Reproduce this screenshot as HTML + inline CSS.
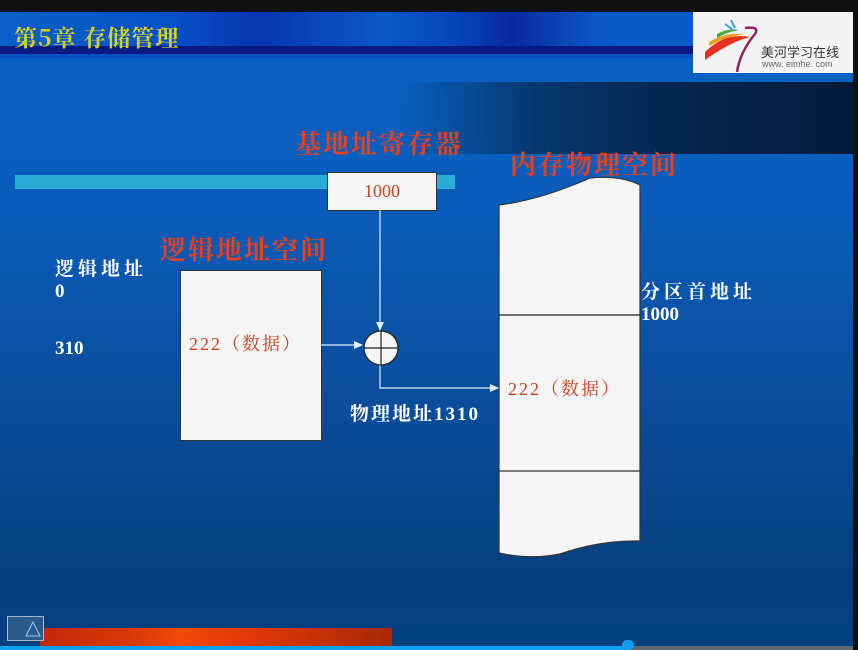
<!DOCTYPE html>
<html><head><meta charset="utf-8"><style>
body{margin:0;width:858px;height:650px;overflow:hidden;background:#111;position:relative;font-family:"Liberation Serif","Noto Serif CJK SC",serif}
.a{position:absolute}
.w{color:#fff;font-weight:bold;font-size:19px;font-family:"Liberation Serif","Noto Serif CJK SC",serif}
.r{color:#e8401c;font-weight:bold;font-size:26px;font-family:"Noto Serif CJK SC",serif;letter-spacing:2px}
</style></head><body>
<div class="a" style="left:0;top:12px;width:853px;height:638px;background:linear-gradient(#0a62c4 0px,#0a5cba 200px,#0a4e9c 380px,#063f80 560px,#05407e 638px)"></div>
<div class="a" style="left:0;top:12px;width:853px;height:46px;background:linear-gradient(90deg,#0a60c8 0%,#0850c8 20%,#0635b0 30%,#0a58c8 45%,#0440b8 55%,#0a28a0 60%,#0a58c8 70%,#0a60c8 100%)"></div>
<div class="a" style="left:0;top:46px;width:853px;height:8px;background:#061a80"></div>
<div class="a" style="left:0;top:54px;width:853px;height:4px;background:#0a4ec0"></div>
<div class="a" style="left:400px;top:82px;width:453px;height:72px;background:linear-gradient(90deg,rgba(4,40,90,0) 0%,#06386e 30%,#042650 60%,#021a38 100%)"></div>
<div class="a" style="left:14px;top:20px;color:#d8d020;font-size:23px;font-weight:bold;font-family:'Noto Serif CJK SC',serif;letter-spacing:1px">第5章 存储管理</div>
<div class="a" style="left:693px;top:12px;width:160px;height:61px;background:#f4f4f4"></div>
<svg class="a" style="left:695px;top:12px" width="70" height="62"><path d="M10 40 Q30 20 55 25 Q35 30 10 48Z" fill="#e83020"/><path d="M14 30 Q30 20 50 22 Q30 25 14 34Z" fill="#f0a020"/><path d="M22 22 Q32 16 44 18 Q32 20 22 26Z" fill="#40b040"/><path d="M30 12 L38 18 M36 8 L40 16" stroke="#40a0e0" stroke-width="2"/><path d="M50 16 Q65 14 60 22 Q45 40 42 60" stroke="#902060" stroke-width="2.5" fill="none"/></svg>
<div class="a" style="left:761px;top:42px;font-size:13px;color:#333;font-family:'Noto Sans CJK SC',sans-serif">美河学习在线</div>
<div class="a" style="left:762px;top:59px;font-size:9px;color:#666;font-family:'Liberation Sans',sans-serif">www. eimhe. com</div>
<div class="a" style="left:15px;top:175px;width:440px;height:14px;background:#28acd8"></div>
<div class="a r" style="left:295px;top:124px">基地址寄存器</div>
<div class="a r" style="left:510px;top:145px">内存物理空间</div>
<div class="a r" style="left:160px;top:230px">逻辑地址空间</div>
<div class="a" style="left:327px;top:172px;width:108px;height:37px;background:#f5f5f5;border:1px solid #333;color:#d04020;font-size:18px;text-align:center;line-height:37px">1000</div>
<div class="a" style="left:180px;top:270px;width:140px;height:169px;background:#f5f5f5;border:1px solid #333"></div>
<div class="a" style="left:189px;top:330px;color:#d04020;font-size:18px;letter-spacing:2px">222（数据）</div>
<svg class="a" style="left:0;top:0" width="858" height="650">
<path d="M499 205 Q540 200 590 178 Q620 175 640 185 L640 541 Q600 540 560 554 Q530 560 499 553Z" fill="#f5f5f5" stroke="#333" stroke-width="1.2"/>
<line x1="499" y1="315" x2="640" y2="315" stroke="#222" stroke-width="1.2"/>
<line x1="499" y1="471" x2="640" y2="471" stroke="#333" stroke-width="1.2"/>
<path d="M380 210 V330 M321 345 H362 M380 365 V388 H498" stroke="#e0f0ff" stroke-width="1.2" fill="none"/>
<path d="M376 322 L380 331 L384 322Z M354 341 L363 345 L354 349Z M490 384 L499 388 L490 392Z" fill="#e0f0ff"/>
<circle cx="381" cy="348" r="17" fill="#f5f5f5" stroke="#222" stroke-width="1.2"/>
<path d="M364 348 H398 M381 331 V365" stroke="#222" stroke-width="1.2"/>
</svg>
<div class="a" style="left:508px;top:375px;color:#d04020;font-size:18px;letter-spacing:2px">222（数据）</div>
<div class="a w" style="left:55px;top:254px;letter-spacing:4px">逻辑地址</div>
<div class="a w" style="left:55px;top:281px">0</div>
<div class="a w" style="left:55px;top:338px">310</div>
<div class="a w" style="left:641px;top:277px;letter-spacing:4px">分区首地址</div>
<div class="a w" style="left:641px;top:304px">1000</div>
<div class="a w" style="left:350px;top:399px;letter-spacing:2px">物理地址1310</div>
<div class="a" style="left:40px;top:628px;width:352px;height:20px;background:linear-gradient(90deg,#c02808,#d83808 25%,#f04a08 40%,#e03808 60%,#a82808 100%)"></div>
<div class="a" style="left:7px;top:616px;width:35px;height:23px;border:1px solid #a8b8c8;background:#2a5a8a"></div>
<svg class="a" style="left:24px;top:620px" width="18" height="18"><path d="M2 16 L9 2 L16 16Z" fill="none" stroke="#9fc8f0"/></svg>
<div class="a" style="left:0;top:646px;width:628px;height:4px;background:#10a0f0"></div>
<div class="a" style="left:628px;top:646px;width:225px;height:4px;background:#606870"></div>
<div class="a" style="left:622px;top:640px;width:12px;height:10px;border-radius:6px;background:#10a0f0"></div>
</body></html>
